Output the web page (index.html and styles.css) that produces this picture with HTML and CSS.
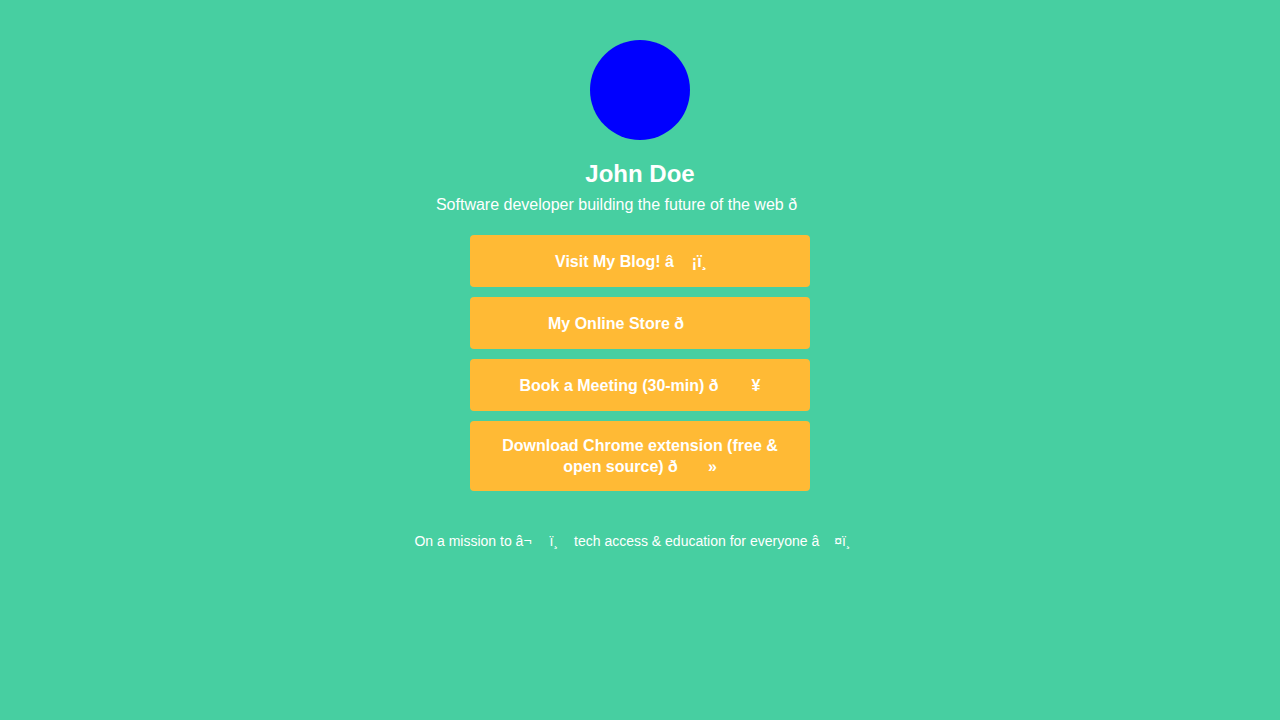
FILE: index.html
```html
<!DOCTYPE html>
<html lang="en">
<head>
<meta charset="utf-8">
<title>John Doe</title>
<link rel="stylesheet" href="styles.css">
</head>
<body>
<main class="page">
  <div class="avatar"></div>
  <h1 class="name">John Doe</h1>
  <p class="bio">Software developer building the future of the web ð<span class="cc w47"></span></p>
  <nav class="links">
    <a class="link" href="#"><span class="label">Visit My Blog! â<span class="cc w18"></span>¡ï¸<span class="cc w18"></span></span></a>
    <a class="link" href="#"><span class="label">My Online Store ð<span class="cc w48"></span></span></a>
    <a class="link" href="#"><span class="label">Book a Meeting (30-min) ð<span class="cc w33"></span>¥</span></a>
    <a class="link" href="#"><span class="label">Download Chrome extension (free &amp; open source) ð<span class="cc w30"></span>»</span></a>
  </nav>
  <p class="footer">On a mission to â¬<span class="cc w18"></span>ï¸<span class="cc w12"></span> tech access &amp; education for everyone â<span class="cc w15"></span>¤ï¸<span class="cc w15"></span></p>
</main>
</body>
</html>
```
FILE: styles.css
```css
html, body {
  margin: 0;
  padding: 0;
  background: #47cfa1;
  font-family: "Liberation Sans", Arial, Helvetica, sans-serif;
  color: #ffffff;
}
.page {
  display: flex;
  flex-direction: column;
  align-items: center;
  padding-top: 40px;
}
.avatar {
  width: 100px;
  height: 100px;
  border-radius: 50%;
  background: #0000ff;
}
.name {
  margin: 20px 0 0;
  font-size: 24px;
  line-height: 28px;
  font-weight: 700;
}
.bio {
  margin: 7px 0 0;
  font-size: 16px;
  line-height: 19px;
}
.links {
  display: flex;
  flex-direction: column;
  gap: 10px;
  margin-top: 21px;
  width: 340px;
}
.link {
  display: flex;
  align-items: center;
  justify-content: center;
  box-sizing: border-box;
  min-height: 52px;
  padding: 14px 30px;
  background: #ffba35;
  border-radius: 4px;
  color: #ffffff;
  text-decoration: none;
  font-weight: 700;
  font-size: 16px;
  line-height: 21px;
  text-align: center;
}
.label {
  display: block;
}
.footer {
  margin: 42px 0 0;
  font-size: 14px;
  line-height: 16px;
}
.cc { display: inline-block; height: 1px; }
.w12 { width: 12px; }
.w15 { width: 15px; }
.w18 { width: 18px; }
.w30 { width: 30px; }
.w33 { width: 33px; }
.w47 { width: 47px; }
.w48 { width: 48px; }
```
